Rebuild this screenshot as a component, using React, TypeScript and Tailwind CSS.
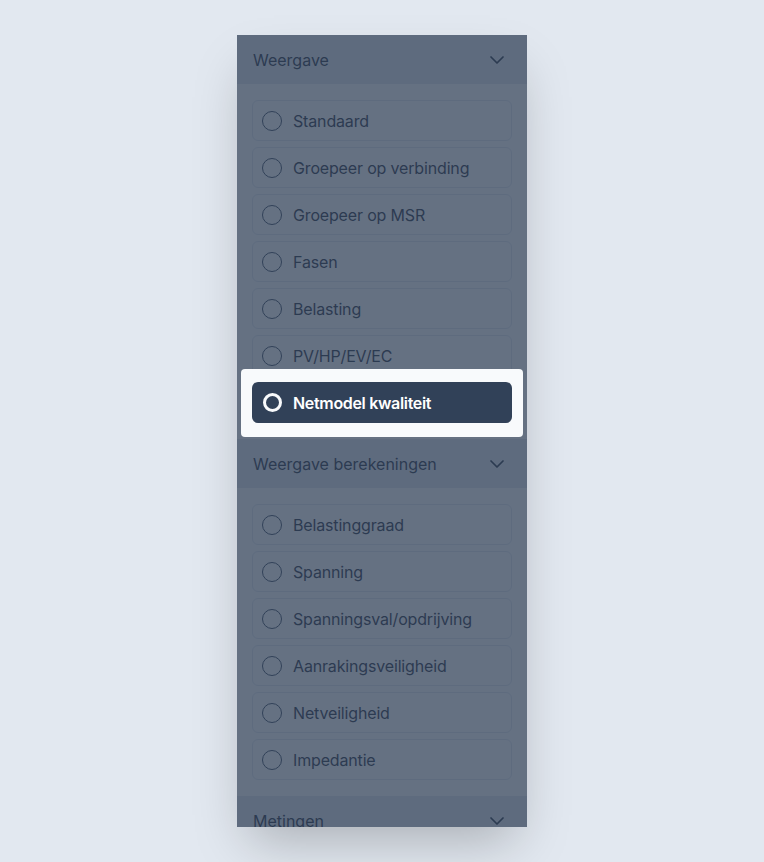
import React from 'react';
import { ChevronDown } from 'lucide-react';

type Section = { title: string; options: string[] };

const sections: Section[] = [
    {
        title: 'Weergave',
        options: [
            'Standaard',
            'Groepeer op verbinding',
            'Groepeer op MSR',
            'Fasen',
            'Belasting',
            'PV/HP/EV/EC',
            'Netmodel kwaliteit',
        ],
    },
    {
        title: 'Weergave berekeningen',
        options: [
            'Belastinggraad',
            'Spanning',
            'Spanningsval/opdrijving',
            'Aanrakingsveiligheid',
            'Netveiligheid',
            'Impedantie',
        ],
    },
    { title: 'Metingen', options: [] },
];

const highlighted = 'Netmodel kwaliteit';

const Option: React.FC<{ label: string }> = ({ label }) => {
    if (label === highlighted) {
        return (
            <div className="relative z-10">
                {/* Spotlight box above the dim layer */}
                <div className="absolute -inset-x-[11px] -top-[13px] -bottom-[14px] rounded bg-slate-50"></div>
                <div className="relative flex h-[41px] items-center gap-[11px] rounded-md bg-slate-700 pl-[11px]">
                    <span className="h-[19px] w-[19px] rounded-full border-[3px] border-slate-50"></span>
                    <span className="text-base font-semibold tracking-[-0.02em] text-white">{label}</span>
                </div>
            </div>
        );
    }

    return (
        <div className="flex h-[41px] items-center gap-[11px] rounded-md border border-slate-200 bg-white pl-[9px]">
            <span className="h-5 w-5 rounded-full border-[1.5px] border-slate-700"></span>
            <span className="text-base tracking-[-0.01em] text-slate-800">{label}</span>
        </div>
    );
};

const App: React.FC = () => {
    return (
        <div
            className="flex min-h-screen justify-center bg-slate-200 pt-[35px]"
            style={{ fontFamily: 'Inter, "Noto Sans", sans-serif' }}
        >
            <div className="relative h-[792px] w-[290px] overflow-hidden bg-white shadow-2xl">
                {sections.map((section) => (
                    <div key={section.title}>
                        <div className="flex h-[49px] items-center justify-between bg-slate-200 pl-4 pr-[18px]">
                            <h3 className="text-base text-slate-800">{section.title}</h3>
                            <ChevronDown size={24} strokeWidth={1.75} className="text-slate-800" />
                        </div>
                        {section.options.length > 0 && (
                            <div className="flex flex-col gap-[6px] px-[15px] py-4">
                                {section.options.map((option) => (
                                    <Option key={option} label={option} />
                                ))}
                            </div>
                        )}
                    </div>
                ))}

                {/* Dim layer */}
                <div className="absolute inset-0 bg-slate-700/75"></div>
            </div>
        </div>
    );
};

export default App;
